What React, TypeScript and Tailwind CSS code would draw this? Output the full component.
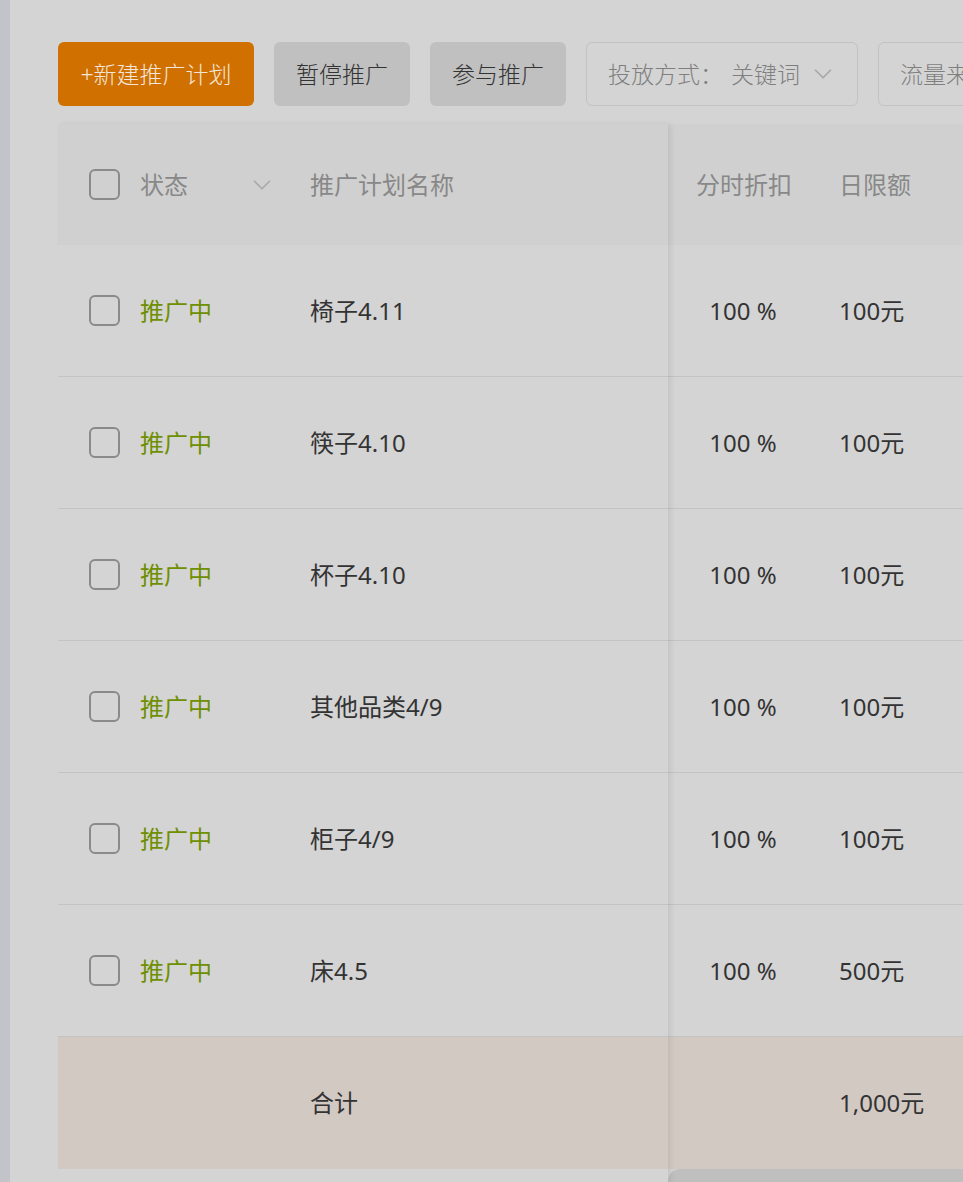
import { ChevronDown } from 'lucide-react';

const rows = [
  { name: '椅子4.11', discount: '100 %', budget: '100元' },
  { name: '筷子4.10', discount: '100 %', budget: '100元' },
  { name: '杯子4.10', discount: '100 %', budget: '100元' },
  { name: '其他品类4/9', discount: '100 %', budget: '100元' },
  { name: '柜子4/9', discount: '100 %', budget: '100元' },
  { name: '床4.5', discount: '100 %', budget: '500元' },
];

function Checkbox() {
  return <div className="h-[31px] w-[31px] shrink-0 rounded-[6px] border-2 border-[#8a8a8a]" />;
}

export default function App() {
  return (
    <div
      className="flex h-[1182px] w-[963px] overflow-hidden bg-[#d4d4d4] text-[#333]"
      style={{ fontFamily: '"Noto Sans", "Noto Sans CJK SC", sans-serif' }}
    >
      <div className="w-[10px] shrink-0 bg-[#c3c4c9]" />
      <div className="min-w-0 flex-1 pl-[48px] pt-[42px]">
        {/* toolbar */}
        <div className="flex h-[64px] gap-5 whitespace-nowrap text-[23px] font-light">
          <button className="w-[196px] shrink-0 rounded-[6px] bg-[#d07000] text-[#f2e6da]">+新建推广计划</button>
          <button className="w-[136px] shrink-0 rounded-[6px] bg-[#c0c0c0] text-[#333]">暂停推广</button>
          <button className="w-[136px] shrink-0 rounded-[6px] bg-[#c0c0c0] text-[#333]">参与推广</button>
          <div className="flex w-[272px] shrink-0 items-center rounded-[6px] border-[1.5px] border-[#c2c2c2] pl-[21px] text-[#7f7f7f]">
            <span>投放方式：</span>
            <span className="ml-[8px]">关键词</span>
            <ChevronDown className="ml-[8px] h-[30px] w-[30px] text-[#a8a8a8]" strokeWidth={1.4} />
          </div>
          <div className="flex w-[240px] shrink-0 items-center overflow-hidden rounded-[6px] border-[1.5px] border-[#c2c2c2] pl-[21px] text-[#7f7f7f]">
            <span>流量来源</span>
          </div>
        </div>

        {/* table */}
        <div className="mt-[18px] flex text-[24px]">
          <div className="relative z-10 w-[610px] shrink-0 shadow-[3px_0_5px_rgba(0,0,0,0.07)]">
            <div className="flex h-[121px] items-center bg-[#d0d0d0] pl-[31px] text-[#888]">
              <Checkbox />
              <span className="ml-[20px] w-[107px]">状态</span>
              <ChevronDown className="h-[30px] w-[30px] text-[#aaa]" strokeWidth={1.4} />
              <span className="ml-[33px]">推广计划名称</span>
            </div>
            {rows.map((r) => (
              <div key={r.name} className="flex h-[132px] items-center border-b border-[#c3c3c3] pl-[31px] first:h-[133px]">
                <Checkbox />
                <span className="ml-[20px] w-[170px] text-[#6e8f00]">推广中</span>
                <span>{r.name}</span>
              </div>
            ))}
            <div className="flex h-[132px] items-center bg-[#d2c9c3] pl-[252px]">
              <span>合计</span>
            </div>
          </div>

          <div className="w-[700px] shrink-0">
            <div className="flex h-[121px] items-center bg-[#d0d0d0] text-[#888]">
              <span className="w-[152px] text-center">分时折扣</span>
              <span className="ml-[19px]">日限额</span>
            </div>
            {rows.map((r) => (
              <div key={r.name} className="flex h-[132px] items-center border-b border-[#c3c3c3] first:h-[133px]">
                <span className="w-[150px] text-center">{r.discount}</span>
                <span className="ml-[21px]">{r.budget}</span>
              </div>
            ))}
            <div className="flex h-[132px] items-center bg-[#d2c9c3]">
              <span className="ml-[171px]">1,000元</span>
            </div>
            <div className="h-[14px] rounded-tl-[12px] bg-[#bfbfbf]" />
          </div>
        </div>
      </div>
    </div>
  );
}
